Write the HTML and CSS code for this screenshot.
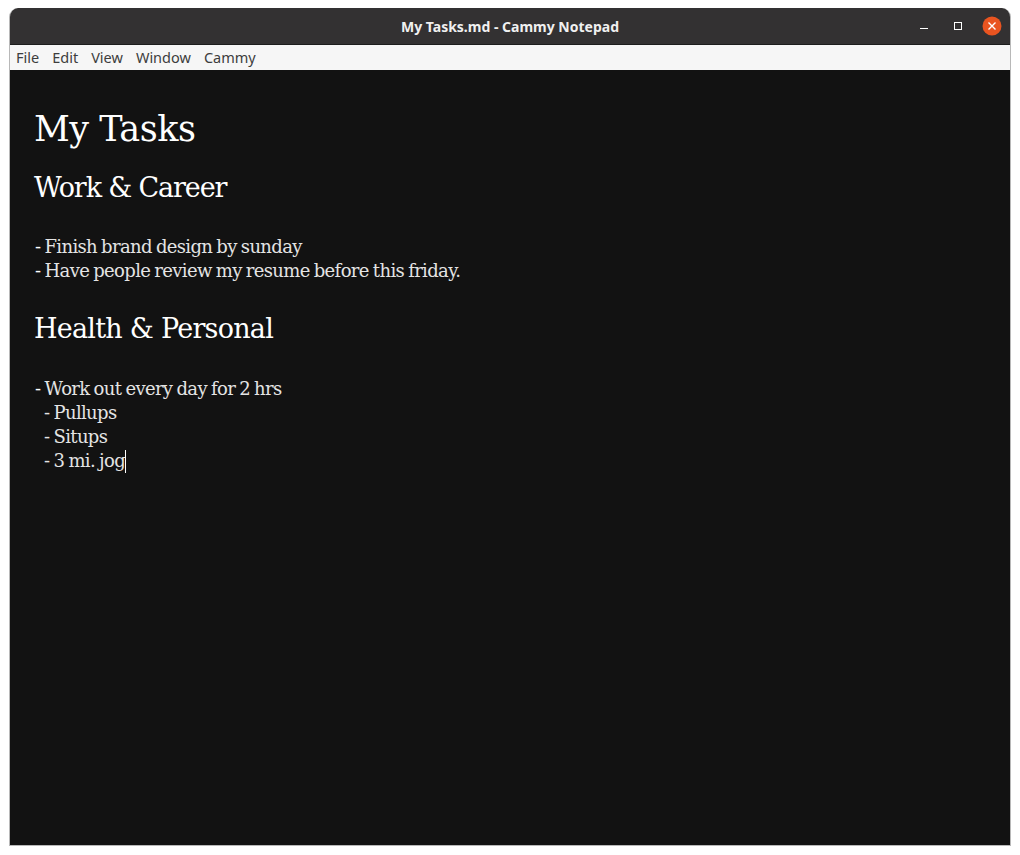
FILE: index.html
```html
<!DOCTYPE html>
<html lang="en">

<head>
    <meta charset="UTF-8">
    <meta name="viewport" content="width=device-width, initial-scale=1.0">
    <title>My Tasks.md - Cammy Notepad</title>
    <link rel="stylesheet" href="styles.css">
</head>

<body>
    <div class="window">
        <div class="titlebar">
            <div></div>
            <div class="window-title">My Tasks.md - Cammy Notepad</div>
            <div class="window-controls">
                <svg class="control minimize" width="16" height="16" viewBox="0 0 16 16">
                    <rect x="4" y="10" width="8" height="1" fill="#ffffff" />
                </svg>
                <svg class="control" width="16" height="16" viewBox="0 0 16 16">
                    <rect x="4.5" y="4.5" width="7" height="7" fill="none" stroke="#ffffff" />
                </svg>
                <svg class="control" width="20" height="20" viewBox="0 0 20 20">
                    <circle cx="10" cy="10" r="9.5" fill="#e95420" />
                    <path d="M6.5 6.5L13.5 13.5M13.5 6.5L6.5 13.5" stroke="#ffffff" stroke-width="1.4" />
                </svg>
            </div>
        </div>
        <div class="menubar">
            <span class="menu-item">File</span>
            <span class="menu-item">Edit</span>
            <span class="menu-item">View</span>
            <span class="menu-item">Window</span>
            <span class="menu-item">Cammy</span>
        </div>
        <div class="editor">
            <h1>My Tasks</h1>
            <h2 class="first">Work &amp; Career</h2>
            <div class="line"><span class="dash">-</span> Finish brand design by sunday</div>
            <div class="line"><span class="dash">-</span> Have people review my resume before this friday.</div>
            <h2>Health &amp; Personal</h2>
            <div class="line"><span class="dash">-</span> Work out every day for 2 hrs</div>
            <div class="line sub">- Pullups</div>
            <div class="line sub">- Situps</div>
            <div class="line sub">- 3 mi. jog<span class="cursor"></span></div>
        </div>
    </div>
</body>

</html>
```

FILE: styles.css
```css
* {
    margin: 0;
    padding: 0;
    box-sizing: border-box;
}

body {
    background-color: #ffffff;
    padding: 8px 9px 9px 9px;
    height: 855px;
    overflow: hidden;
}

.window {
    display: flex;
    flex-direction: column;
    height: 838px;
    border: 1px solid #b8b8b8;
    border-top: none;
    border-radius: 9px 9px 0 0;
    overflow: hidden;
}

.titlebar {
    display: grid;
    grid-template-columns: 1fr auto 1fr;
    align-items: center;
    height: 37px;
    flex-shrink: 0;
    background-color: #333132;
    border-bottom: 1px solid #1d1d1d;
}

.window-title {
    font-family: 'Noto Sans', sans-serif;
    font-size: 14px;
    font-weight: 700;
    color: #f0f0f0;
}

.window-controls {
    display: flex;
    align-items: center;
    justify-content: flex-end;
    gap: 16px;
    padding-right: 8px;
}

.minimize {
    margin-right: 2px;
}

.menubar {
    display: flex;
    align-items: center;
    gap: 13px;
    height: 25px;
    flex-shrink: 0;
    padding: 0 0 2px 6px;
    background-color: #f6f6f6;
    font-family: 'Noto Sans', sans-serif;
    font-size: 14.5px;
    color: #3d3d3d;
}

.editor {
    flex: 1;
    padding: 36px 25px 0 25px;
    background-color: #121212;
    color: #e4e4e4;
    font-family: 'DejaVu Serif', serif;
}

h1 {
    margin-left: -1px;
    font-size: 35px;
    font-weight: 400;
    line-height: 46px;
    letter-spacing: -0.5px;
    color: #ffffff;
}

h2 {
    margin-top: 28px;
    margin-bottom: 30px;
    margin-left: -1px;
    font-size: 27px;
    font-weight: 400;
    line-height: 36px;
    letter-spacing: -0.75px;
    color: #ffffff;
}

h2.first {
    margin-top: 18px;
    margin-bottom: 29px;
    letter-spacing: -1.15px;
}

.line {
    font-size: 18px;
    line-height: 24px;
    letter-spacing: -0.65px;
    word-spacing: -1px;
    white-space: pre;
}

.dash {
    color: #ffffff;
}

.sub {
    padding-left: 9px;
}

.cursor {
    display: inline-block;
    width: 1px;
    height: 23px;
    vertical-align: -6px;
    background-color: #ffffff;
}
```
